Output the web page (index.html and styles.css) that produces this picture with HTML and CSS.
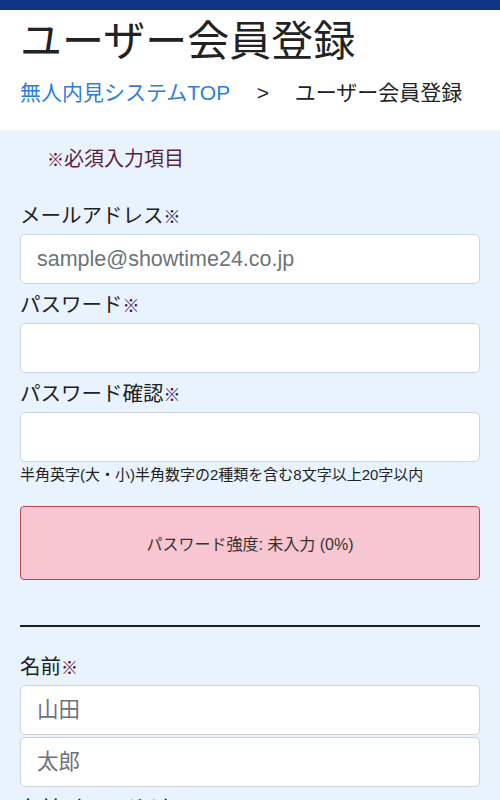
FILE: index.html
```html
<!DOCTYPE html>
<html lang="ja">
<head>
  <meta charset="UTF-8">
  <meta name="viewport" content="width=device-width, height=device-height">
  <title>ユーザー会員登録</title>
  <link rel="stylesheet" href="styles.css">
</head>
<body>
  <div class="topbar"></div>

  <header class="page-head">
    <h1 class="title">ユーザー会員登録</h1>
    <nav class="crumbs">
      <a href="#">無人内見システムTOP</a>
      <span class="sep">&gt;</span>
      <span>ユーザー会員登録</span>
    </nav>
  </header>

  <main class="signup">
    <p class="note"><small class="req">※</small>必須入力項目</p>

    <div class="field">
      <label>メールアドレス<small class="req">※</small></label>
      <input type="email" placeholder="sample@showtime24.co.jp">
    </div>

    <div class="field">
      <label>パスワード<small class="req">※</small></label>
      <input type="password">
    </div>

    <div class="field">
      <label>パスワード確認<small class="req">※</small></label>
      <input type="password">
      <p class="hint">半角英字(大・小)半角数字の2種類を含む8文字以上20字以内</p>
    </div>

    <div class="strength">パスワード強度: 未入力 (0%)</div>

    <hr class="divider">

    <div class="field name-field">
      <label>名前<small class="req">※</small></label>
      <input type="text" placeholder="山田">
      <input type="text" placeholder="太郎">
    </div>

    <div class="field">
      <label>名前（フリガナ）<small class="req">※</small></label>
      <input type="text" placeholder="ヤマダ">
    </div>
  </main>
</body>
</html>
```

FILE: styles.css
```css
* {
  box-sizing: border-box;
}

body {
  margin: 0;
  font-family: "Liberation Sans", "Noto Sans CJK JP", sans-serif;
  color: #222;
  background: #e8f3fd;
}

.topbar {
  height: 10px;
  background-color: #0e3488;
}

.page-head {
  background: #fff;
  padding: 10px 20px 0;
  height: 120px;
}

.title {
  margin: 0;
  font-size: 42px;
  font-weight: normal;
  line-height: 44px;
  color: #222;
}

.crumbs {
  margin-top: 14px;
  font-size: 21px;
  line-height: 30px;
  color: #222;
}

.crumbs a {
  color: #2a7de1;
  text-decoration: none;
}

.crumbs .sep {
  margin: 0 20px 0 21px;
}

.signup {
  padding: 16px 20px 40px;
}

.note {
  margin: 0 0 30px 27px;
  font-size: 20px;
  line-height: 26px;
  color: #5c1f44;
}

.req {
  font-size: 17px;
  font-weight: bold;
  color: #55102f;
}

.field {
  display: flex;
  flex-direction: column;
  gap: 2px;
  margin-bottom: 9px;
}

.name-field {
  margin-bottom: 10px;
}

.field label {
  font-size: 20.5px;
  line-height: 24px;
  margin-bottom: 2px;
}

.field input {
  height: 50px;
  width: 100%;
  padding: 0 16px;
  font-family: inherit;
  font-size: 21.5px;
  color: #333;
  background: #fff;
  border: 1px solid #cfd4da;
  border-radius: 5px;
}

.field input::placeholder {
  color: #6c737a;
}

.hint {
  margin: 2px 0 0;
  font-size: 15px;
  line-height: 18px;
  color: #222;
}

.strength {
  margin-top: 22px;
  height: 74px;
  display: flex;
  align-items: center;
  justify-content: center;
  font-size: 16px;
  color: #333;
  background: #f8c6d0;
  border: 1px solid #c9404f;
  border-radius: 4px;
}

.divider {
  margin: 45px 0 28px;
  border: 0;
  border-top: 2px solid #1e1e1e;
}
```
